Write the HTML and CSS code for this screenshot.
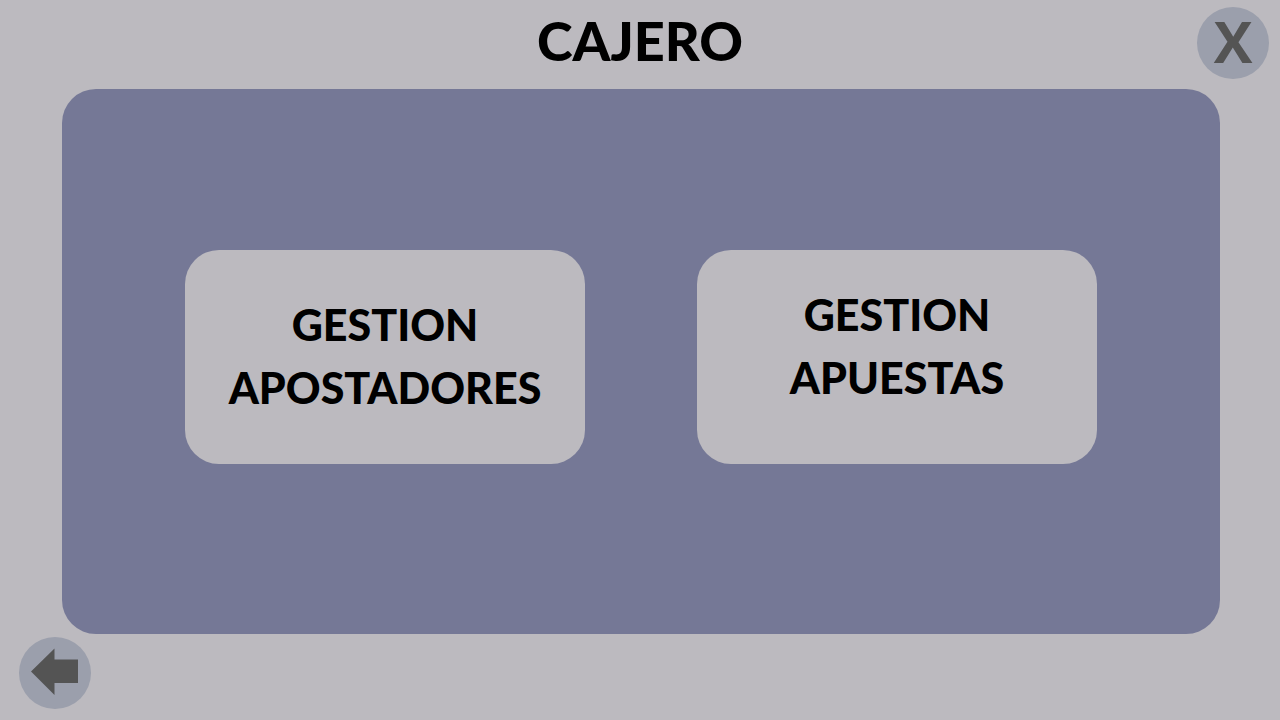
FILE: index.html
```html
<!DOCTYPE html>
<html lang="es">
<head>
  <meta charset="utf-8">
  <meta name="viewport" content="width=device-width, initial-scale=1">
  <title>Cajero</title>
  <link rel="stylesheet" href="styles.css">
</head>
<body>
  <header class="top">
    <h1 class="title">CAJERO</h1>
    <button class="round close" type="button">X</button>
  </header>
  <main class="panel">
    <button class="tile" type="button">GESTION<br>APOSTADORES</button>
    <button class="tile tile-raised" type="button">GESTION<br>APUESTAS</button>
  </main>
  <footer class="bottom">
    <button class="round" type="button" aria-label="Volver">
      <svg class="arrow" viewBox="0 0 72 72" aria-hidden="true">
        <path d="M12 34.500 35.500 11.500V22.500H59V46H35.500V58Z" fill="#545454"/>
      </svg>
    </button>
  </footer>
</body>
</html>
```
FILE: styles.css
```css
* {
  box-sizing: border-box;
}

body {
  margin: 0;
  min-height: 100vh;
  display: flex;
  flex-direction: column;
  background: #bcbabf;
  color: #000;
  font-family: Lato, "Liberation Sans", sans-serif;
}

button {
  border: 0;
  padding: 0;
  color: inherit;
  font: inherit;
  cursor: pointer;
}

.top {
  display: grid;
  grid-template-columns: 1fr auto 1fr;
  align-items: start;
  padding: 7px 11px 10px;
}

.title {
  grid-column: 2;
  margin: 0;
  font-size: 54px;
  line-height: 67px;
  font-weight: 900;
}

.round {
  display: flex;
  align-items: center;
  justify-content: center;
  width: 72px;
  height: 72px;
  border-radius: 50%;
  background: #9b9fac;
  color: #545454;
}

.close {
  justify-self: end;
  padding-bottom: 4px;
  font-family: "Open Sans", sans-serif;
  font-size: 58px;
  line-height: 68px;
  font-weight: 700;
}

.arrow {
  width: 100%;
  height: 100%;
}

.panel {
  flex: 1;
  display: flex;
  align-items: center;
  gap: 112px;
  margin: 0 60px 0 62px;
  padding: 0 123px 9px;
  border-radius: 34px;
  background: #757896;
}

.tile {
  flex: 1 1 0;
  min-height: 214px;
  padding-bottom: 2px;
  border-radius: 34px;
  background: #bcbabf;
  font-size: 43px;
  line-height: 63px;
  font-weight: 900;
}

.tile-raised {
  padding-bottom: 22px;
}

.bottom {
  padding: 3px 19px 11px;
}
```
